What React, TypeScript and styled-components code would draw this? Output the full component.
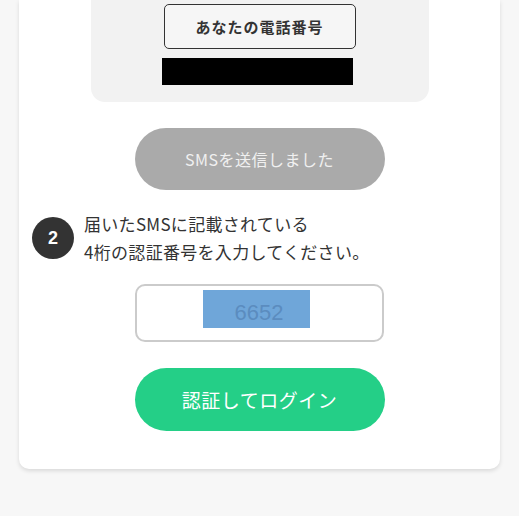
import React from "react";
import styled, { createGlobalStyle } from "styled-components";

const Global = createGlobalStyle`
  html, body { margin: 0; padding: 0; background: #f7f7f7; }
  body { font-family: "Noto Sans CJK JP", "Noto Sans", sans-serif; color: #333; }
`;

const Page = styled.div`
  padding: 0 19px 0 19px;
  height: 516px;
  box-sizing: border-box;
`;

const Card = styled.div`
  background: #fff;
  border-radius: 0 0 10px 10px;
  box-shadow: 0 2px 4px rgba(0, 0, 0, 0.12);
  padding: 0 0 38px;
  display: flex;
  flex-direction: column;
  align-items: center;
`;

const PhonePanel = styled.div`
  width: 338px;
  background: #f2f2f2;
  border-radius: 0 0 14px 14px;
  padding: 4px 0 17px;
  display: flex;
  flex-direction: column;
  align-items: center;
  gap: 9px;
`;

const Label = styled.div`
  width: 192px;
  height: 45px;
  box-sizing: border-box;
  border: 1px solid #333;
  border-radius: 5px;
  background: #f6f6f6;
  display: flex;
  align-items: center;
  justify-content: center;
  font-size: 15px;
  letter-spacing: 1px;
  font-weight: 700;
  color: #333;
`;

const Redacted = styled.div`
  width: 191px;
  height: 27px;
  background: #000;
  margin-left: -5px;
`;

const PillButton = styled.button<{ $variant: "done" | "primary" }>`
  width: 250px;
  height: ${(p) => (p.$variant === "done" ? 62 : 63)}px;
  margin-top: 26px;
  border: none;
  border-radius: 32px;
  background: ${(p) => (p.$variant === "done" ? "#aaaaaa" : "#24cf87")};
  color: ${(p) => (p.$variant === "done" ? "#f0f0f0" : "#fff")};
  font-family: inherit;
  font-size: ${(p) => (p.$variant === "done" ? 16 : 19)}px;
  letter-spacing: 0.5px;
  display: flex;
  align-items: center;
  justify-content: center;
  padding: 0;
`;

const StepRow = styled.div`
  align-self: stretch;
  display: flex;
  align-items: center;
  gap: 10px;
  padding-left: 13px;
  margin-top: 20px;
`;

const StepBadge = styled.div`
  width: 42px;
  height: 42px;
  border-radius: 50%;
  background: #333;
  color: #fff;
  font-family: "Liberation Sans", Arial, sans-serif;
  font-weight: 700;
  font-size: 18px;
  display: flex;
  align-items: center;
  justify-content: center;
  flex: none;
`;

const StepText = styled.p`
  margin: 0;
  font-size: 17px;
  line-height: 28px;
  letter-spacing: 0.3px;
  color: #333;
`;

const CodeField = styled.div`
  margin-top: 18px;
  width: 249px;
  height: 58px;
  box-sizing: border-box;
  border: 2px solid #cbcbcb;
  border-radius: 10px;
  background: #fff;
  display: flex;
  align-items: center;
  justify-content: center;
`;

const Selected = styled.span`
  width: 107px;
  height: 38px;
  margin-left: -6px;
  margin-top: -8px;
  background: #6fa6d9;
  color: #5b8cbf;
  font-family: "Liberation Sans", Arial, sans-serif;
  font-size: 22px;
  display: flex;
  align-items: center;
  justify-content: center;
  padding: 7px 0 0 5px;
  box-sizing: border-box;
`;

export default function App() {
  return (
    <>
      <Global />
      <Page>
        <Card>
          <PhonePanel>
            <Label>あなたの電話番号</Label>
            <Redacted />
          </PhonePanel>
          <PillButton $variant="done">SMSを送信しました</PillButton>
          <StepRow>
            <StepBadge>2</StepBadge>
            <StepText>
              届いたSMSに記載されている
              <br />
              4桁の認証番号を入力してください。
            </StepText>
          </StepRow>
          <CodeField>
            <Selected>6652</Selected>
          </CodeField>
          <PillButton $variant="primary">認証してログイン</PillButton>
        </Card>
      </Page>
    </>
  );
}
